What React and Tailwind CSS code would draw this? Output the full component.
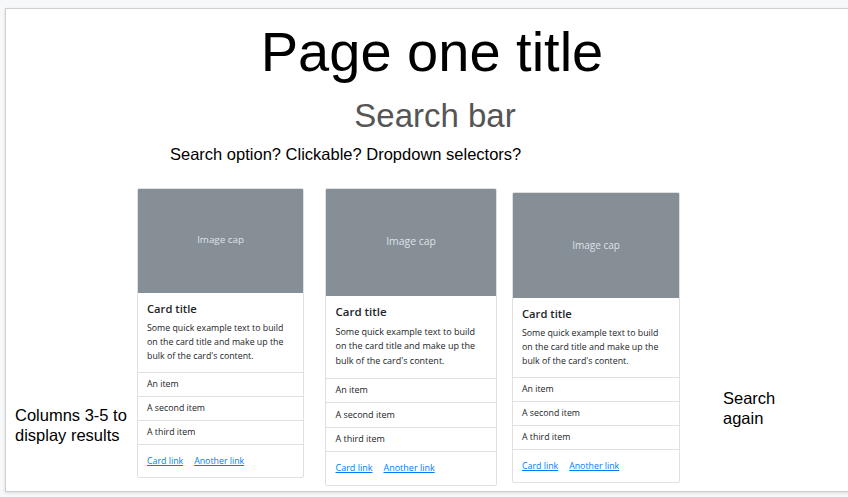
import React from "react";

function Card({ big, tall }) {
  const w = big ? "w-[172px]" : tall ? "w-[168px]" : "w-[167px]";
  const img = big ? "h-[107px] text-[10.4px]" : tall ? "h-[105px] text-[10px]" : "h-[104px] text-[9.8px]";
  const pad = big ? "px-[9.5px] py-[9.5px]" : "px-[9px] py-[9px]";
  const foot = big ? "px-[9.5px] py-[9px]" : "px-[9px] py-[9px]";
  const title = big ? "text-[11.5px] leading-[14.5px] mb-[5px]" : "text-[11.2px] leading-[14px] mb-[5px]";
  const txt = big ? "text-[9px] leading-[14.5px]" : "text-[8.8px] leading-[14px]";
  const item = big ? "px-[9.5px] py-[4.5px] text-[9px] leading-[14.5px]" : "px-[9px] py-[4.5px] text-[8.8px] leading-[14px]";
  return (
    <div
      className={`${w} shrink-0 bg-white border border-[#e0e0e0] rounded-[2px] overflow-hidden text-[#212529]`}
      style={{ fontFamily: '"Open Sans", "Noto Sans", sans-serif' }}
    >
      <div className={`${img} bg-[#868e96] text-[#dee2e6] flex items-center justify-center`}>Image cap</div>
      <div className={pad}>
        <div className={`${title} font-semibold`}>Card title</div>
        <div className={`${txt} whitespace-nowrap`}>
          Some quick example text to build
          <br />
          on the card title and make up the
          <br />
          bulk of the card's content.
        </div>
      </div>
      <div className="border-t border-[#e0e0e0]">
        <div className={`${item} border-b border-[#e0e0e0]`}>An item</div>
        <div className={`${item} border-b border-[#e0e0e0]`}>A second item</div>
        <div className={`${item} border-b border-[#e0e0e0]`}>A third item</div>
      </div>
      <div className={`${foot} ${txt} flex`}>
        <span className="text-[#007bff] underline">Card link</span>
        <span className="text-[#007bff] underline ml-[11px]">Another link</span>
      </div>
    </div>
  );
}

export default function App() {
  return (
    <div
      className="w-[848px] h-[497px] overflow-hidden bg-[#f7f8f9] pt-[8px] pl-[5px]"
      style={{ fontFamily: '"Liberation Sans", Arial, sans-serif' }}
    >
      <div className="w-[854px] h-[484px] bg-white border border-[#cfcfcf] shadow-[0_1px_3px_rgba(0,0,0,0.12)] pt-[15px]">
        <div className="text-center text-[56px] leading-none text-black">Page one title</div>
        <div className="text-center text-[33px] leading-none text-[#555555] mt-[19px] pl-[6px]">Search bar</div>
        <div className="text-[16.5px] leading-none text-black mt-[14px] ml-[164px]">
          Search option? Clickable? Dropdown selectors?
        </div>
        <div className="flex items-start mt-[25px]">
          <div className="w-[131px] shrink-0 pl-[9px] pt-[217px] text-[16.5px] leading-[20px] whitespace-nowrap text-black">
            Columns 3-5 to
            <br />
            display results
          </div>
          <Card />
          <div className="ml-[21px]">
            <Card big />
          </div>
          <div className="ml-[15px] mt-[4px]">
            <Card tall />
          </div>
          <div className="ml-[43px] pt-[200px] text-[16.5px] leading-[20px] text-black">
            Search
            <br />
            again
          </div>
        </div>
      </div>
    </div>
  );
}
